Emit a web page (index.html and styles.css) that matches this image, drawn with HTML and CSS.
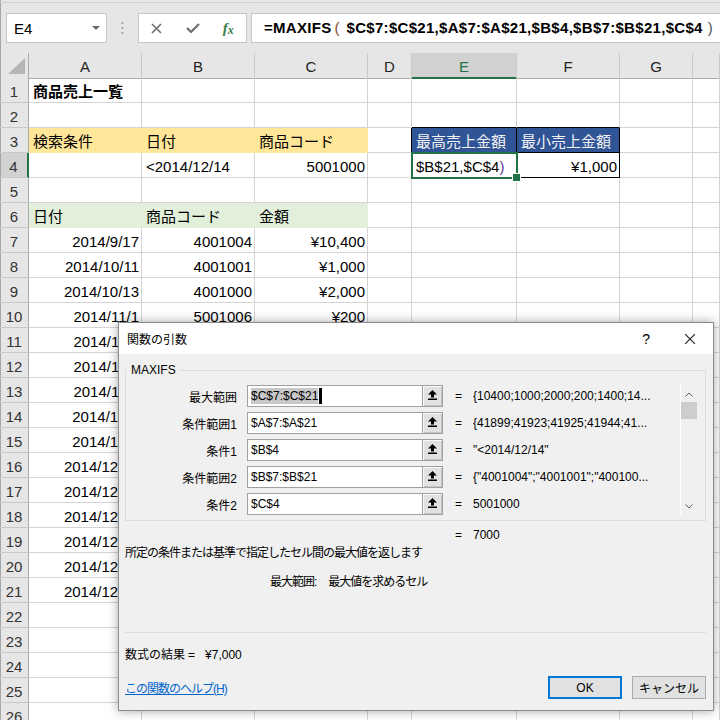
FILE: index.html
```html
<!DOCTYPE html>
<html lang="ja">
<head>
<meta charset="utf-8">
<title>関数の引数 - MAXIFS</title>
<link rel="stylesheet" href="styles.css">
</head>
<body>
<div class="app">
  <div class="topbar">
    <div class="fbar">
      <div class="namebox"><span>E4</span><svg width="8" height="4" viewBox="0 0 8 4"><path d="M0 0H8L4 4Z" fill="#6b6b6b"/></svg></div>
      <div class="grip"><svg width="3" height="12" viewBox="0 0 3 12"><rect x="0.5" y="0" width="2" height="2" fill="#a8a8a8"/><rect x="0.5" y="5" width="2" height="2" fill="#a8a8a8"/><rect x="0.5" y="10" width="2" height="2" fill="#a8a8a8"/></svg></div>
      <div class="btns">
        <span><svg width="11" height="11" viewBox="0 0 11 11"><path d="M1 1L10 10M10 1L1 10" stroke="#6e6e6e" stroke-width="1.6"/></svg></span>
        <span><svg width="14" height="10" viewBox="0 0 14 10"><path d="M1 5L5 9L13 1" stroke="#6e6e6e" stroke-width="2.2" fill="none"/></svg></span>
        <span class="fx"><i>f</i><i class="sx">x</i></span>
      </div>
      <div class="formula">=MAXIFS<span class="pa po">(</span>$C$7:$C$21,$A$7:$A$21,$B$4,$B$7:$B$21,$C$4<span class="pa pc">)</span></div>
    </div>
  </div>

  <div class="sheet">
    <div class="row hdr"><div class="corner"><svg width="17" height="16" viewBox="0 0 17 16"><path d="M17 0V16H0Z" fill="#b5b5b5"/></svg></div><div>A</div><div>B</div><div>C</div><div>D</div><div class="hsel">E</div><div>F</div><div>G</div><div></div></div>
    <div class="row"><div class="rh">1</div><div class="bold">商品売上一覧</div><div></div><div></div><div></div><div></div><div></div><div></div><div></div></div>
    <div class="row"><div class="rh">2</div><div></div><div></div><div></div><div></div><div class="bb"></div><div class="bb"></div><div></div><div></div></div>
    <div class="row"><div class="rh">3</div><div class="y">検索条件</div><div class="y">日付</div><div class="y">商品コード</div><div class="br"></div><div class="blue">最高売上金額</div><div class="blue">最小売上金額</div><div></div><div></div></div>
    <div class="row"><div class="rh rsel">4</div><div></div><div>&lt;2014/12/14</div><div class="n">5001000</div><div class="br"></div><div class="box e4">$B$21,$C$4<span class="cp">)</span></div><div class="box n">¥1,000</div><div></div><div></div></div>
    <div class="row"><div class="rh">5</div><div></div><div></div><div></div><div></div><div></div><div></div><div></div><div></div></div>
    <div class="row"><div class="rh">6</div><div class="g">日付</div><div class="g">商品コード</div><div class="g">金額</div><div></div><div></div><div></div><div></div><div></div></div>
    <div class="row"><div class="rh">7</div><div class="n">2014/9/17</div><div class="n">4001004</div><div class="n">¥10,400</div><div></div><div></div><div></div><div></div><div></div></div>
    <div class="row"><div class="rh">8</div><div class="n">2014/10/11</div><div class="n">4001001</div><div class="n">¥1,000</div><div></div><div></div><div></div><div></div><div></div></div>
    <div class="row"><div class="rh">9</div><div class="n">2014/10/13</div><div class="n">4001000</div><div class="n">¥2,000</div><div></div><div></div><div></div><div></div><div></div></div>
    <div class="row"><div class="rh">10</div><div class="n">2014/11/1</div><div class="n">5001006</div><div class="n">¥200</div><div></div><div></div><div></div><div></div><div></div></div>
    <div class="row"><div class="rh">11</div><div class="n">2014/11/5</div><div></div><div></div><div></div><div></div><div></div><div></div><div></div></div>
    <div class="row"><div class="rh">12</div><div class="n">2014/11/8</div><div></div><div></div><div></div><div></div><div></div><div></div><div></div></div>
    <div class="row"><div class="rh">13</div><div class="n">2014/11/9</div><div></div><div></div><div></div><div></div><div></div><div></div><div></div></div>
    <div class="row"><div class="rh">14</div><div class="n">2014/12/1</div><div></div><div></div><div></div><div></div><div></div><div></div><div></div></div>
    <div class="row"><div class="rh">15</div><div class="n">2014/12/3</div><div></div><div></div><div></div><div></div><div></div><div></div><div></div></div>
    <div class="row"><div class="rh">16</div><div class="n">2014/12/10</div><div></div><div></div><div></div><div></div><div></div><div></div><div></div></div>
    <div class="row"><div class="rh">17</div><div class="n">2014/12/12</div><div></div><div></div><div></div><div></div><div></div><div></div><div></div></div>
    <div class="row"><div class="rh">18</div><div class="n">2014/12/14</div><div></div><div></div><div></div><div></div><div></div><div></div><div></div></div>
    <div class="row"><div class="rh">19</div><div class="n">2014/12/16</div><div></div><div></div><div></div><div></div><div></div><div></div><div></div></div>
    <div class="row"><div class="rh">20</div><div class="n">2014/12/18</div><div></div><div></div><div></div><div></div><div></div><div></div><div></div></div>
    <div class="row"><div class="rh">21</div><div class="n">2014/12/20</div><div></div><div></div><div></div><div></div><div></div><div></div><div></div></div>
    <div class="row"><div class="rh">22</div><div></div><div></div><div></div><div></div><div></div><div></div><div></div><div></div></div>
    <div class="row"><div class="rh">23</div><div></div><div></div><div></div><div></div><div></div><div></div><div></div><div></div></div>
    <div class="row"><div class="rh">24</div><div></div><div></div><div></div><div></div><div></div><div></div><div></div><div></div></div>
    <div class="row"><div class="rh">25</div><div></div><div></div><div></div><div></div><div></div><div></div><div></div><div></div></div>
    <div class="row"><div class="rh">26</div><div></div><div></div><div></div><div></div><div></div><div></div><div></div><div></div></div>
  </div>

  <div class="dlg">
    <div class="dlg-title">
      <span class="tt">関数の引数</span>
      <span class="help">?</span>
      <svg width="10" height="10" viewBox="0 0 10 10"><path d="M0 0L10 10M10 0L0 10" stroke="#1e1e1e" stroke-width="1.1"/></svg>
    </div>
    <div class="dlg-body">
      <fieldset class="grp">
        <legend>MAXIFS</legend>
        <div class="grp-inner">
          <div class="args">
            <div class="arg"><label>最大範囲</label><div class="inp"><span class="hl">$C$7:$C$21</span><span class="caret"></span></div><div class="ref"><svg width="9" height="10" viewBox="0 0 9 10"><path d="M4.5 0L9 4.5H6V7.5H3V4.5H0Z" fill="#000"/><rect x="0" y="8.5" width="9" height="1.5" fill="#000"/></svg></div><span class="eq">=</span><span class="val">{10400;1000;2000;200;1400;14...</span></div>
            <div class="arg"><label>条件範囲1</label><div class="inp">$A$7:$A$21</div><div class="ref"><svg width="9" height="10" viewBox="0 0 9 10"><path d="M4.5 0L9 4.5H6V7.5H3V4.5H0Z" fill="#000"/><rect x="0" y="8.5" width="9" height="1.5" fill="#000"/></svg></div><span class="eq">=</span><span class="val">{41899;41923;41925;41944;41...</span></div>
            <div class="arg"><label>条件1</label><div class="inp">$B$4</div><div class="ref"><svg width="9" height="10" viewBox="0 0 9 10"><path d="M4.5 0L9 4.5H6V7.5H3V4.5H0Z" fill="#000"/><rect x="0" y="8.5" width="9" height="1.5" fill="#000"/></svg></div><span class="eq">=</span><span class="val">"&lt;2014/12/14"</span></div>
            <div class="arg"><label>条件範囲2</label><div class="inp">$B$7:$B$21</div><div class="ref"><svg width="9" height="10" viewBox="0 0 9 10"><path d="M4.5 0L9 4.5H6V7.5H3V4.5H0Z" fill="#000"/><rect x="0" y="8.5" width="9" height="1.5" fill="#000"/></svg></div><span class="eq">=</span><span class="val">{"4001004";"4001001";"400100...</span></div>
            <div class="arg"><label>条件2</label><div class="inp">$C$4</div><div class="ref"><svg width="9" height="10" viewBox="0 0 9 10"><path d="M4.5 0L9 4.5H6V7.5H3V4.5H0Z" fill="#000"/><rect x="0" y="8.5" width="9" height="1.5" fill="#000"/></svg></div><span class="eq">=</span><span class="val">5001000</span></div>
          </div>
          <div class="vscroll">
            <svg class="up" width="8" height="5" viewBox="0 0 8 5"><path d="M0.5 4.5L4 1L7.5 4.5" stroke="#606060" fill="none"/></svg>
            <div class="thumb"></div>
            <svg class="down" width="8" height="5" viewBox="0 0 8 5"><path d="M0.5 0.5L4 4L7.5 0.5" stroke="#606060" fill="none"/></svg>
          </div>
        </div>
      </fieldset>
      <div class="res"><span class="eq2">=</span><span>7000</span></div>
      <p class="desc">所定の条件または基準で指定したセル間の最大値を返します</p>
      <p class="argdesc"><span class="an">最大範囲:</span><span>最大値を求めるセル</span></p>
      <hr>
      <p class="result"><span>数式の結果</span><span class="req">=</span><span>¥7,000</span></p>
      <div class="foot">
        <a href="#" class="help-link">この関数のヘルプ(H)</a>
        <div class="btnrow"><button class="ok">OK</button><button>キャンセル</button></div>
      </div>
    </div>
  </div>
</div>
</body>
</html>
```

FILE: styles.css
```css
* { box-sizing: border-box; }
html, body { margin: 0; padding: 0; }
body {
  width: 720px; height: 720px; overflow: hidden; background: #fff; color: #000;
  font-family: "Liberation Sans", "Noto Sans CJK JP", sans-serif;
}
.app { position: relative; width: 720px; height: 720px; overflow: hidden; }

/* formula bar */
.topbar { height: 53px; background: #e6e6e6; padding-top: 2px; box-shadow: inset 1px 0 0 #a6a6a6; }
.fbar { display: flex; align-items: flex-start; height: 51px; border-top: 1px solid #d0d0d0; padding-top: 10px; }
.namebox {
  margin-left: 6px; width: 101px; height: 30px; background: #fff; border: 1px solid #c6c6c6;
  display: flex; align-items: center; justify-content: space-between; padding: 0 6px 0 7px; font-size: 15px;
}
.grip { width: 31px; height: 30px; display: flex; justify-content: center; align-items: center; }
.btns { width: 109px; height: 30px; background: #fff; border: 1px solid #c6c6c6; display: flex; align-items: center; }
.btns > span { width: 36px; display: flex; justify-content: center; align-items: center; }
.fx { font-family: "Liberation Serif", serif; color: #3b7d4c; font-size: 15px; font-weight: bold; }
.fx .sx { font-size: 12px; position: relative; top: 2px; }
.formula {
  margin-left: 4px; flex: 1; height: 30px; background: #fff; border: 1px solid #c6c6c6; border-right: 0;
  padding-left: 12px; font-weight: bold; font-size: 15px; letter-spacing: 0.3px;
  line-height: 28px; white-space: nowrap; overflow: hidden;
}
.pa { display: inline-block; width: 15px; text-align: center; font-weight: normal; letter-spacing: 0; }
.po { color: #7a4a2c; text-align: left; padding-left: 3px; }
.pc { color: #555; }

/* sheet */
.row {
  display: grid; grid-template-columns: 29px 113px 113px 113px 44px 105px 103px 73px 27px;
  height: 25px; font-size: 15px;
}
.row > div {
  border-right: 1px solid #d4d4d4; border-bottom: 1px solid #d4d4d4;
  padding: 3px 2px 0 4px; line-height: 21px; white-space: nowrap;
}
.row > .rh {
  background: #e6e6e6; border-right-color: #ababab; border-bottom-color: #c9c9c9;
  text-align: center; padding: 3px 0 0; color: #333; box-shadow: inset 1px 0 0 #a6a6a6;
}
.row > .rsel { background: #d2d2d2; border-right: 2px solid #217346; color: #333; }
.hdr > div {
  background: #e6e6e6; border-right-color: #c9c9c9; border-bottom-color: #ababab;
  text-align: center; padding: 3px 0 0; color: #222;
}
.hdr > .corner {
  border-right-color: #ababab; display: flex; align-items: flex-end; justify-content: flex-end;
  padding: 0 3px 4px 0; box-shadow: inset 1px 0 0 #a6a6a6;
}
.hdr > .hsel { background: #d2d2d2; border-bottom: 2px solid #217346; color: #217346; }
.row > .n { text-align: right; }
.row > .bold { font-weight: bold; }
.row > .y { background: #ffe699; border-color: #ffe699; }
.row > .g { background: #e2efda; border-color: #e2efda; }
.row > .blue { background: #2f5597; color: #f2f2f2; border-right-color: #000; border-bottom-color: #000; }
.row > .box { border-right-color: #000; border-bottom-color: #000; }
.row > .br { border-right-color: #000; }
.row > .bb { border-bottom-color: #000; }
.row > .e4 { position: relative; outline: 2px solid #217346; outline-offset: -1px; }
.e4::after {
  content: ""; position: absolute; right: -5px; bottom: -5px; width: 7px; height: 7px;
  background: #217346; border: 1px solid #fff;
}
.cp { color: #5b3a9a; }

/* dialog */
.dlg {
  position: absolute; left: 118px; top: 322px; width: 596px; height: 389px;
  background: #f0f0f0; border: 1px solid #8a8a8a; box-shadow: 0 0 10px rgba(0,0,0,0.35);
  font-size: 12px; font-family: "Liberation Sans", "Noto Sans CJK JP", sans-serif; color: #000;
}
.dlg-title { height: 31px; background: #fff; display: flex; align-items: center; padding: 0 18px 0 8px; }
.dlg-title .tt { flex: 1; }
.help { font-size: 14px; margin-right: 35px; }
.dlg-body { padding: 8px 7px 0 6px; }
.grp { margin: 0; padding: 7px 8px 5px 0; border: 1px solid #dcdcdc; min-width: 0; }
.grp legend { margin-left: 1px; padding: 0 4px; line-height: 16px; }
.grp-inner { display: flex; }
.args { display: flex; flex-direction: column; gap: 5px; }
.arg { display: grid; grid-template-columns: 121px 176px 20px 30px 208px; height: 22px; align-items: center; }
.arg label { text-align: right; padding-right: 10px; }
.inp {
  height: 22px; border: 1px solid #a0a0a0; background: #fff; padding-left: 3px;
  display: flex; align-items: center; white-space: nowrap;
}
.hl { background: #c8c8c8; line-height: 16px; }
.caret { display: inline-block; width: 3px; height: 16px; background: #000; margin-left: 1px; }
.ref {
  height: 22px; border: 1px solid #a0a0a0; border-left: 0; background: #e1e1e1;
  box-shadow: inset 1px 1px 0 #fafafa, inset -1px -1px 0 #c4c4c4;
  display: flex; justify-content: center; align-items: center; padding-bottom: 2px;
}
.eq { padding-left: 12px; }
.val { white-space: nowrap; overflow: hidden; }
.vscroll {
  width: 16px; display: flex; flex-direction: column; align-items: center;
  box-shadow: -1px 0 0 #fff; background: #f0f0f0;
}
.vscroll .up { margin-top: 7px; }
.thumb { width: 16px; height: 17px; background: #cdcdcd; margin-top: 5px; }
.vscroll .down { margin-top: auto; margin-bottom: 6px; }

.res { margin-top: 6px; line-height: 16px; padding-left: 330px; display: flex; }
.eq2 { width: 18px; }
.dlg p { margin: 0; line-height: 16px; }
.dlg .desc { margin-top: 2px; letter-spacing: -1px; }
.dlg .argdesc { margin-top: 13px; padding-left: 145px; letter-spacing: -1px; }
.an { margin-right: 12px; }
.dlg hr { margin: 42px 0 0; border: 0; border-top: 1px solid #dcdcdc; height: 0; }
.dlg .result { margin-top: 14px; }
.req { margin: 0 10px 0 3px; }
.foot { margin-top: 13px; height: 23px; display: flex; align-items: center; justify-content: space-between; }
.help-link { color: #0066cc; text-decoration: underline; letter-spacing: -1px; }
.btnrow { display: flex; gap: 10px; }
.btnrow button {
  width: 74px; height: 23px; padding: 0; font: inherit; color: #000;
  background: #e1e1e1; border: 1px solid #adadad;
}
.btnrow .ok { border: 2px solid #0078d7; }
```
